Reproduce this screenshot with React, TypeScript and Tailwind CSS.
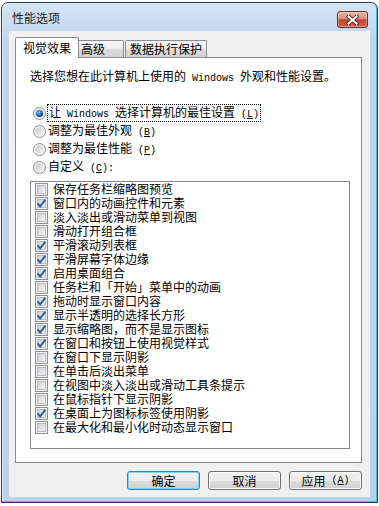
import React from "react";

const items: [string, boolean][] = [
  ["保存任务栏缩略图预览", false],
  ["窗口内的动画控件和元素", true],
  ["淡入淡出或滑动菜单到视图", false],
  ["滑动打开组合框", false],
  ["平滑滚动列表框", true],
  ["平滑屏幕字体边缘", true],
  ["启用桌面组合", true],
  ["任务栏和「开始」菜单中的动画", false],
  ["拖动时显示窗口内容", true],
  ["显示半透明的选择长方形", true],
  ["显示缩略图，而不是显示图标", true],
  ["在窗口和按钮上使用视觉样式", true],
  ["在窗口下显示阴影", false],
  ["在单击后淡出菜单", false],
  ["在视图中淡入淡出或滑动工具条提示", false],
  ["在鼠标指针下显示阴影", false],
  ["在桌面上为图标标签使用阴影", true],
  ["在最大化和最小化时动态显示窗口", false],
];

function Mono({ children }: { children: React.ReactNode }) {
  return (
    <span className="font-[family-name:'Liberation_Mono',monospace] text-[10px] whitespace-pre">
      {children}
    </span>
  );
}

function CheckBox({ checked, id }: { checked: boolean; id: number }) {
  return (
    <svg width="13" height="13" viewBox="0 0 13 13" className="shrink-0 block">
      <defs>
        <linearGradient id={`cbg${id}`} x1="0" y1="0" x2="1" y2="1">
          <stop offset="0" stopColor="#c9cdd3" />
          <stop offset="1" stopColor="#f8f8f8" />
        </linearGradient>
      </defs>
      <rect x="0.5" y="0.5" width="12" height="12" fill="#f4f4f4" stroke="#8f8f8f" />
      <rect x="2.5" y="2.5" width="8" height="8" fill={`url(#cbg${id})`} stroke="#b8bcc2" />
      {checked && (
        <path
          d="M2.6 6.4 L5.2 9.4 L10.4 2.6"
          fill="none"
          stroke="#2f5c9c"
          strokeWidth="1.9"
          strokeLinejoin="miter"
        />
      )}
    </svg>
  );
}

function Radio({ selected, id }: { selected: boolean; id: number }) {
  return (
    <svg width="13" height="13" viewBox="0 0 13 13" className="shrink-0 block">
      <defs>
        <linearGradient id={`rg${id}`} x1="0" y1="0" x2="1" y2="1">
          <stop offset="0" stopColor="#c5c8cd" />
          <stop offset="1" stopColor="#f4f4f4" />
        </linearGradient>
        <radialGradient id={`rs${id}`} cx="0.4" cy="0.35" r="0.7">
          <stop offset="0" stopColor="#9ad7fb" />
          <stop offset="0.45" stopColor="#2d78c8" />
          <stop offset="1" stopColor="#0c3a80" />
        </radialGradient>
      </defs>
      <circle cx="6.5" cy="6.5" r="6" fill="#f3f3f3" stroke="#8c8c8c" />
      <circle cx="6.5" cy="6.5" r="4" fill={`url(#rg${id})`} />
      {selected && <circle cx="6.5" cy="6.5" r="3.6" fill={`url(#rs${id})`} />}
    </svg>
  );
}

function CloseButton() {
  return (
    <div className="mt-[8px] w-[31px] h-[17px] rounded-[3px] border border-[#6b2a22] bg-[linear-gradient(180deg,#ebb3a6_0%,#dc8c7c_45%,#c2412c_52%,#d4614b_100%)] shadow-[inset_0_0_0_1px_rgba(255,255,255,0.35)] flex items-center justify-center">
      <svg width="13" height="10" viewBox="0 0 13 10" className="block">
        <path d="M2.5 1.5 L10.5 8.5 M10.5 1.5 L2.5 8.5" stroke="#4d2c2a" strokeWidth="3.8" strokeLinecap="square" />
        <path d="M2.5 1.5 L10.5 8.5 M10.5 1.5 L2.5 8.5" stroke="#ffffff" strokeWidth="2" strokeLinecap="square" />
      </svg>
    </div>
  );
}

function Btn({ children, def }: { children: React.ReactNode; def?: boolean }) {
  return (
    <div
      className={
        def
          ? "w-[73px] h-[19px] rounded-[3px] border border-[#3c7fb1] bg-[linear-gradient(180deg,#f2f2f2_0%,#ebebeb_50%,#dddddd_51%,#cfcfcf_100%)] shadow-[inset_0_0_0_1px_#7fd3f5] flex items-center justify-center leading-[17px]"
          : "w-[73px] h-[19px] rounded-[3px] border border-[#707070] bg-[linear-gradient(180deg,#f2f2f2_0%,#ebebeb_50%,#dddddd_51%,#cfcfcf_100%)] shadow-[inset_0_0_0_1px_#fbfbfb] flex items-center justify-center leading-[17px]"
      }
    >
      {children}
    </div>
  );
}

export default function App() {
  return (
    <div className="w-[379px] h-[506px] bg-white pt-[2px] pl-[1px] font-[family-name:'Noto_Sans_CJK_SC',sans-serif] text-[12px] text-black">
      <div className="w-[377px] h-[501px] border border-[#2b3a4a] rounded-t-[7px] bg-[linear-gradient(180deg,#d4e4f5_0%,#bfd5ec_8%,#bad2eb_100%)] shadow-[inset_-1px_-1px_0_#3fc3ee,inset_1px_1px_0_#e6f0fa] flex flex-col">
        <div className="h-[28px] flex items-start justify-between pl-[10px] pr-[9px]">
          <span className="mt-[7px] leading-[16px] text-[#1b1b1b]">性能选项</span>
          <CloseButton />
        </div>
        <div className="ml-[7px] w-[361px] h-[466px] bg-[#f0f0f0] px-[6px] pt-[6px] flex flex-col">
          <div className="h-[20px] flex items-end">
            <div className="relative z-10 h-[21px] mb-[-1px] w-[64px] bg-white border border-b-0 border-[#898c95] rounded-t-[2px] pl-[7px] leading-[19px]">
              视觉效果
            </div>
            <div className="h-[17px] w-[45px] border border-b-0 border-l-0 border-[#898c95] rounded-tr-[2px] bg-[linear-gradient(180deg,#f7f7f7_0%,#eeeeee_45%,#dcdcdc_55%,#d2d2d2_100%)] pl-[2px] leading-[16px]">
              高级
            </div>
            <div className="ml-[1px] h-[17px] w-[82px] border border-b-0 border-[#898c95] rounded-t-[2px] bg-[linear-gradient(180deg,#f7f7f7_0%,#eeeeee_45%,#dcdcdc_55%,#d2d2d2_100%)] pl-[4px] leading-[16px]">
              数据执行保护
            </div>
          </div>
          <div className="w-[347px] h-[406px] border border-[#898c95] bg-white pl-[14px] flex flex-col">
            <div className="mt-[10px] h-[16px] leading-[16px] whitespace-nowrap">
              选择您想在此计算机上使用的<Mono> Windows </Mono>外观和性能设置。
            </div>
            <div className="mt-[20px] flex flex-col">
              <div className="h-[18px] flex items-center pl-[3px] gap-[1px]">
                <Radio selected id={0} />
                <span className="border border-dotted border-black px-[1px] leading-[13px] whitespace-nowrap">
                  让<Mono> Windows </Mono>选择计算机的最佳设置<Mono> (<span className="underline">L</span>)</Mono>
                </span>
              </div>
              <div className="h-[18px] flex items-center pl-[3px] gap-[2px]">
                <Radio selected={false} id={1} />
                <span className="leading-[14px] whitespace-nowrap">
                  调整为最佳外观<Mono> (<span className="underline">B</span>)</Mono>
                </span>
              </div>
              <div className="h-[18px] flex items-center pl-[3px] gap-[2px]">
                <Radio selected={false} id={2} />
                <span className="leading-[14px] whitespace-nowrap">
                  调整为最佳性能<Mono> (<span className="underline">P</span>)</Mono>
                </span>
              </div>
              <div className="h-[18px] flex items-center pl-[3px] gap-[2px]">
                <Radio selected={false} id={3} />
                <span className="leading-[14px] whitespace-nowrap">
                  自定义<Mono> (<span className="underline">C</span>):</Mono>
                </span>
              </div>
            </div>
            <div className="mt-[5px] w-[320px] h-[268px] border border-[#828790] bg-white flex flex-col">
              {items.map(([label, checked], i) => (
                <div key={i} className="h-[14px] flex items-center pl-[4px] gap-[5px]">
                  <CheckBox checked={checked} id={i} />
                  <span className="leading-[14px] whitespace-nowrap">{label}</span>
                </div>
              ))}
            </div>
          </div>
          <div className="mt-[8px] w-[347px] flex justify-end gap-[8px]">
            <Btn def>确定</Btn>
            <Btn>取消</Btn>
            <Btn>
              应用<Mono> (<span className="underline">A</span>)</Mono>
            </Btn>
          </div>
        </div>
      </div>
    </div>
  );
}
